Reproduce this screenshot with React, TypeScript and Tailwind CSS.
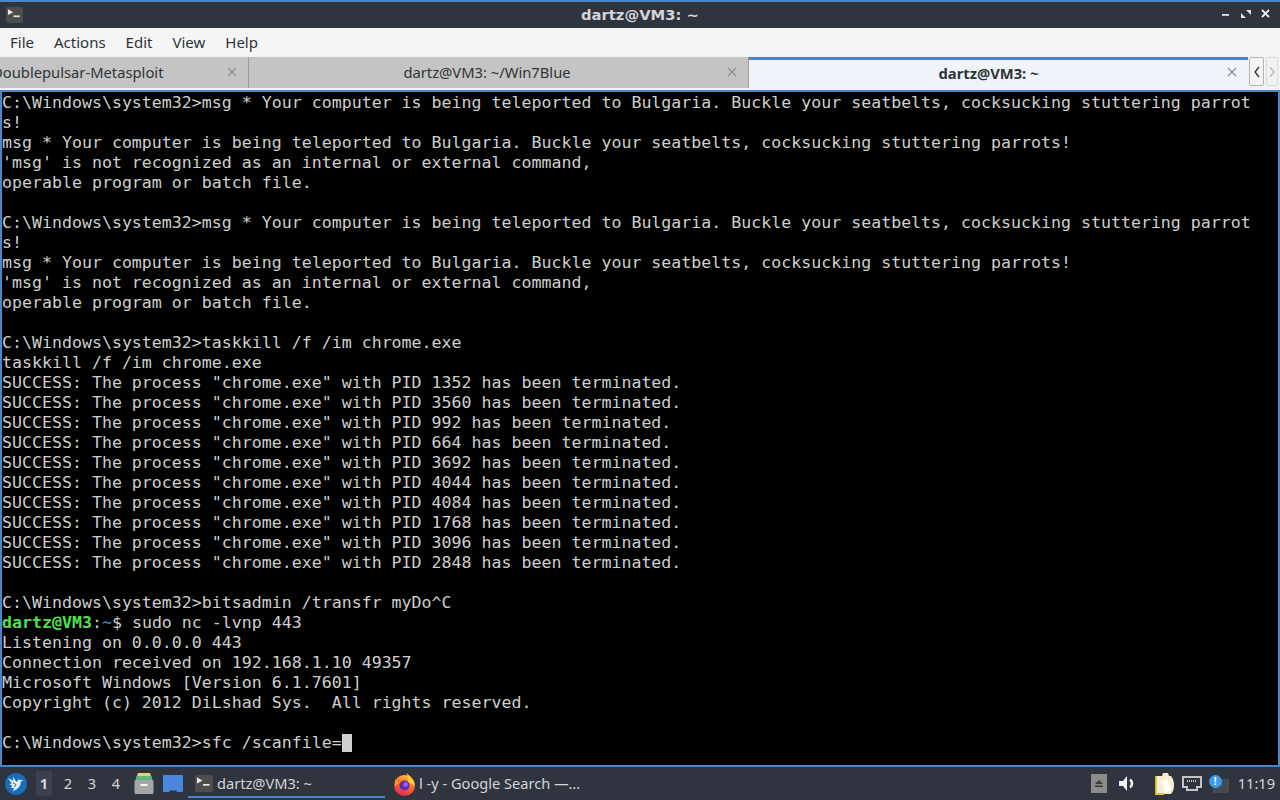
const prompt = "C:\\Windows\\system32>";
const teleport = "msg * Your computer is being teleported to Bulgaria. Buckle your seatbelts, cocksucking stuttering parrot";

const pids = ["1352", "3560", "992", "664", "3692", "4044", "4084", "1768", "3096", "2848"];

const before = [
  prompt + teleport,
  "s!",
  "msg * Your computer is being teleported to Bulgaria. Buckle your seatbelts, cocksucking stuttering parrots!",
  "'msg' is not recognized as an internal or external command,",
  "operable program or batch file.",
  "",
  prompt + teleport,
  "s!",
  "msg * Your computer is being teleported to Bulgaria. Buckle your seatbelts, cocksucking stuttering parrots!",
  "'msg' is not recognized as an internal or external command,",
  "operable program or batch file.",
  "",
  prompt + "taskkill /f /im chrome.exe",
  "taskkill /f /im chrome.exe",
  ...pids.map((pid) => `SUCCESS: The process "chrome.exe" with PID ${pid} has been terminated.`),
  "",
  prompt + "bitsadmin /transfr myDo^C",
];

const after = [
  "Listening on 0.0.0.0 443",
  "Connection received on 192.168.1.10 49357",
  "Microsoft Windows [Version 6.1.7601]",
  "Copyright (c) 2012 DiLshad Sys.  All rights reserved.",
  "",
];

function TermIcon({ width, height }: { width: number; height: number }) {
  return (
    <svg width={width} height={height} viewBox="0 0 18 17">
      <rect x="0" y="0" width="18" height="17" rx="1.5" fill="#4d4d4d" />
      <path d="M2 2.5l5.5 3L2 8.5z" fill="#ececec" />
      <rect x="8" y="9" width="6.5" height="1.7" fill="#ececec" />
    </svg>
  );
}

function CloseX({ className }: { className: string }) {
  return (
    <svg className={`absolute right-[11px] ${className}`} width="10" height="10" viewBox="0 0 10 10">
      <path d="M1 1l8 8M9 1l-8 8" stroke="#8a8a8a" strokeWidth="1.1" />
    </svg>
  );
}

function TitleBar() {
  return (
    <div className="relative h-[28px] shrink-0 bg-[#2f343f] border-t-2 border-[#4a86c8] flex items-center justify-center">
      <div className="absolute left-[6px] top-[5px] flex">
        <TermIcon width={17} height={16} />
      </div>
      <span className="text-[14.75px] font-bold text-[#d3d5d9] font-['DejaVu_Sans',sans-serif]">dartz@VM3: ~</span>
      <div className="absolute right-[9px] top-[6px] flex items-center gap-[10px]">
        <svg width="10" height="12" viewBox="0 0 10 12">
          <rect x="1" y="6" width="7" height="1.8" fill="#e6e6e6" />
        </svg>
        <svg width="10" height="12" viewBox="0 0 10 12">
          <path d="M5 2h5v5zM0 5l5 5H0z" fill="#e6e6e6" />
        </svg>
        <svg width="10" height="12" viewBox="0 0 10 12">
          <path d="M1 2l7 7M8 2l-7 7" stroke="#f0f0f0" strokeWidth="1.8" />
        </svg>
      </div>
    </div>
  );
}

function MenuBar() {
  return (
    <div className="h-[28px] shrink-0 bg-[#f5f5f5] flex items-center pl-[10px] gap-[20px] text-[15px] text-[#2e3436] font-['Noto_Sans',sans-serif]">
      <span>File</span>
      <span>Actions</span>
      <span>Edit</span>
      <span>View</span>
      <span>Help</span>
    </div>
  );
}

function TabBar() {
  return (
    <div className="h-[34px] shrink-0 bg-[#f2f2f2] flex items-start pt-[1px] text-[14.75px] text-[#2e3436] font-['Noto_Sans',sans-serif]">
      <div className="relative flex items-center h-[31px] w-[249px] bg-[#c4c4c4] border-r border-[#9c9c9c] overflow-hidden">
        <span className="whitespace-nowrap -ml-[8px]">Doublepulsar-Metasploit</span>
        <CloseX className="top-[10px]" />
      </div>
      <div className="relative flex items-center justify-center h-[31px] w-[500px] bg-[#c4c4c4] border-r border-[#9c9c9c]">
        <span className="whitespace-nowrap -ml-[23px]">dartz@VM3: ~/Win7Blue</span>
        <CloseX className="top-[10px]" />
      </div>
      <div className="relative flex items-center justify-center h-[33px] w-[499px] pb-[4px] bg-[#eff4fa] border-t-[3px] border-[#4a86c8]">
        <span className="whitespace-nowrap font-bold -ml-[20px]">dartz@VM3: ~</span>
        <CloseX className="top-[7px]" />
      </div>
      <div className="flex-1 flex items-start gap-[2px] pl-[1px]">
        <div className="w-[15px] h-[29px] rounded-[2px] border border-[#b4b4b4] bg-[#f4f4f4] flex items-center justify-center">
          <svg width="8" height="12" viewBox="0 0 8 12">
            <path d="M6 1L2 6l4 5" fill="none" stroke="#333" strokeWidth="1.3" />
          </svg>
        </div>
        <div className="w-[12px] h-[29px] rounded-[2px] border border-[#dadada] flex items-center justify-center">
          <svg width="8" height="12" viewBox="0 0 8 12">
            <path d="M2 1l4 5-4 5" fill="none" stroke="#aaa" strokeWidth="1.2" />
          </svg>
        </div>
      </div>
    </div>
  );
}

function Terminal() {
  return (
    <div className="flex-1 min-h-0 bg-black border-2 border-[#4a86c8] pt-[1px] overflow-hidden text-[16.6px] leading-[20px] text-[#cfcfcf] whitespace-pre font-['DejaVu_Sans_Mono',monospace]">
      {before.map((line, i) => (
        <div key={i} className="h-[20px]">{line}</div>
      ))}
      <div className="h-[20px]">
        <span className="font-bold text-[#4ee34e]">dartz@VM3</span>
        <span>:</span>
        <span className="font-bold text-[#3b6fb5]">~</span>
        <span>$ sudo nc -lvnp 443</span>
      </div>
      {after.map((line, i) => (
        <div key={i} className="h-[20px]">{line}</div>
      ))}
      <div className="h-[20px] flex">
        <span>{prompt}sfc /scanfile=</span>
        <span className="w-[10px] h-[18px] mt-[1px] bg-[#cfcfcf]" />
      </div>
    </div>
  );
}

function StartIcon() {
  return (
    <svg width="22" height="22" viewBox="0 0 22 22">
      <circle cx="11" cy="11" r="11" fill="#1b6cb8" />
      <path
        d="M3 5l5 2.5L8 4l3.5 5 2-2.5 2.5.2 2.5 1-2.5.8-.8 4-3 3.5-4.5 2.5 1.5-3-3.5-1 1.5-1.5-3-2 2.5-.2z"
        fill="#dcebf8"
      />
      <path d="M8 10l3 1.5-1.5 2.5" fill="none" stroke="#1b6cb8" strokeWidth="1" />
    </svg>
  );
}

function Firefox() {
  return (
    <svg width="23" height="24" viewBox="0 0 23 24">
      <defs>
        <linearGradient id="ff" x1="0.7" y1="0" x2="0.3" y2="1">
          <stop offset="0" stopColor="#ffc331" />
          <stop offset="0.5" stopColor="#f8682c" />
          <stop offset="1" stopColor="#e31f5a" />
        </linearGradient>
      </defs>
      <circle cx="11.5" cy="13.5" r="10.5" fill="url(#ff)" />
      <path d="M13 1c4 2.5 8 7 9 12l-7-3c1-3 0-6-2-9z" fill="#ffd03c" />
      <path d="M2 7c1 2 3 3 5 3l-5 4z" fill="#ff9a2e" />
      <circle cx="11.5" cy="13.5" r="5" fill="#5a2db0" />
      <circle cx="12.5" cy="12.5" r="2.4" fill="#9c5fe4" />
    </svg>
  );
}

function Taskbar() {
  return (
    <div className="h-[33px] shrink-0 bg-[#2f343f] flex items-center text-[#d3d5d9] text-[14.6px] font-['Noto_Sans',sans-serif]">
      <div className="w-[32px] pl-[5px] flex">
        <StartIcon />
      </div>
      <div className="flex items-center">
        <div className="w-[24px] flex justify-center">
          <span className="w-[16px] h-[25px] flex items-center justify-center font-bold bg-[#3a404c]">1</span>
        </div>
        <span className="w-[24px] text-center">2</span>
        <span className="w-[24px] text-center">3</span>
        <span className="w-[24px] text-center">4</span>
      </div>
      <svg className="ml-[6px]" width="20" height="21" viewBox="0 0 20 21">
        <path d="M4 0h12l1 3H3z" fill="#e8d36a" />
        <path d="M2.5 3h15l1 4h-17z" fill="#5cb88a" />
        <rect x="0.5" y="7" width="19" height="14" rx="1.5" fill="#a6a6a6" />
        <rect x="6.5" y="11" width="7" height="2" fill="#f4f4f4" />
      </svg>
      <svg className="ml-[9px]" width="20" height="17" viewBox="0 0 20 17">
        <path d="M0 1a1 1 0 011-1h18a1 1 0 011 1v15a1 1 0 01-1 1h-5l-1-1.5H7L6 17H1a1 1 0 01-1-1z" fill="#4a86dc" />
      </svg>
      <div className="relative ml-[5px] w-[197px] h-full flex items-center gap-[4px] pl-[7px]">
        <TermIcon width={18} height={17} />
        <span>dartz@VM3: ~</span>
        <span className="absolute left-0 right-0 bottom-[2px] h-[2px] bg-[#4a86c8]" />
      </div>
      <div className="ml-[8px] flex items-center gap-[3px]">
        <Firefox />
        <span>l -y - Google Search —…</span>
      </div>
      <div className="ml-auto flex items-center">
        <div className="w-[16px] h-[19px] bg-[#8c8c8c] flex items-center justify-center">
          <svg width="10" height="8" viewBox="0 0 10 8">
            <path d="M5 0l4 4H1z" fill="#3a3a3a" />
            <rect x="1" y="5.5" width="8" height="1.5" fill="#3a3a3a" />
          </svg>
        </div>
        <svg className="ml-[12px]" width="17" height="15" viewBox="0 0 17 15">
          <path d="M0 5h4l4-5v15l-4-5H0z" fill="#f2f2f2" />
          <path d="M11 3.5a5 5 0 010 8" fill="none" stroke="#f2f2f2" strokeWidth="2.6" />
        </svg>
        <svg className="ml-[19px]" width="20" height="22" viewBox="0 0 20 22">
          <path d="M1 3h6l1-3h5l1 3h2c4 5 4 14 0 18H1z" fill="#f5efd0" />
          <path d="M1 3v18h8" fill="none" stroke="#e3c93a" strokeWidth="1.8" />
          <path d="M6 8l6-2 4 11-6 2z" fill="#ffffff" />
        </svg>
        <svg className="ml-[7px]" width="20" height="15" viewBox="0 0 20 15">
          <path d="M1 1h18v10h-4v3H5v-3H1z" fill="#2f343f" stroke="#c4c4c4" strokeWidth="2" />
          <path d="M5 4h1v2H5zM7 4h1v2H7zM9 4h1v2H9zM11 4h1v2h-1zM13 4h1v2h-1z" fill="#c4c4c4" />
        </svg>
        <div className="relative ml-[7px] w-[20px] h-[18px]">
          <div className="absolute right-0 bottom-0 w-[16px] h-[14px] bg-[#464b53]" />
          <div className="absolute left-0 top-0 w-[13px] h-[13px] rounded-full bg-[#3d9be8] flex items-center justify-center text-[10px] leading-none font-bold text-white">!</div>
        </div>
        <span className="ml-[9px] mr-[5px]">11:19</span>
      </div>
    </div>
  );
}

export default function App() {
  return (
    <div className="w-[1280px] h-[800px] flex flex-col overflow-hidden bg-[#2f343f]">
      <TitleBar />
      <MenuBar />
      <TabBar />
      <Terminal />
      <Taskbar />
    </div>
  );
}
